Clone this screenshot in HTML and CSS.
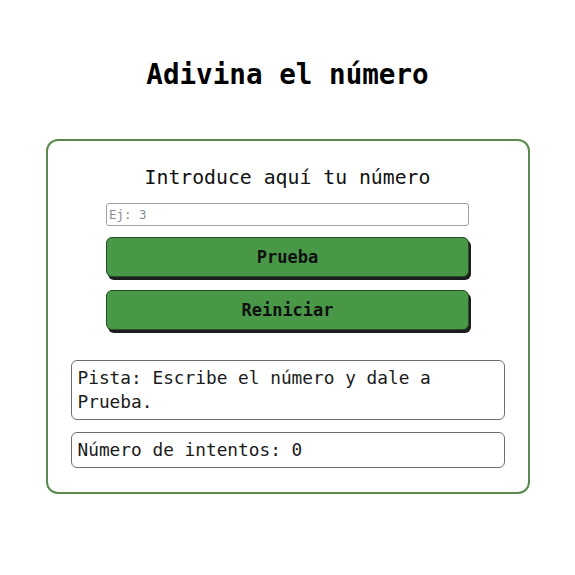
FILE: index.html
```html
<!DOCTYPE html>
<html lang="es">
<head>
<meta charset="utf-8">
<title>Adivina el número</title>
<link rel="stylesheet" href="styles.css">
</head>
<body>
<h1 class="title">Adivina el número</h1>
<main class="card">
  <h2 class="prompt">Introduce aquí tu número</h2>
  <div class="controls">
    <input class="guess" type="text" placeholder="Ej: 3">
    <button class="btn btn-try" type="button">Prueba</button>
    <button class="btn btn-reset" type="button">Reiniciar</button>
  </div>
  <div class="messages">
    <p class="msg">Pista: Escribe el número y dale a Prueba.</p>
    <p class="msg">Número de intentos: 0</p>
  </div>
</main>
</body>
</html>
```
FILE: styles.css
```css
* { box-sizing: border-box; }
html, body { margin: 0; padding: 0; background: #fff; }
body {
  font-family: "DejaVu Sans Mono", "Liberation Mono", monospace;
  color: #111;
  padding-top: 59px;
}
.title {
  margin: 0 0 48px;
  font-size: 27.6px;
  line-height: 32px;
  font-weight: bold;
  text-align: center;
  color: #000;
}
.card {
  width: 484px;
  margin: 0 auto;
  border: 2px solid #5b8a50;
  border-radius: 12px;
  padding: 25px 23px 24px 23px;
  display: flex;
  flex-direction: column;
}
.prompt {
  margin: 0;
  font-size: 19.8px;
  line-height: 24px;
  font-weight: normal;
  text-align: center;
}
.controls {
  width: 363px;
  margin: 13px auto 0;
  display: flex;
  flex-direction: column;
}
.guess {
  height: 23px;
  border: 1px solid #a0a0a0;
  border-radius: 3px;
  padding: 1px 2px;
  font-family: "DejaVu Sans Mono", monospace;
  font-size: 12.5px;
  color: #333;
  outline: none;
}
.guess::placeholder { color: #8c8c8c; }
.btn {
  height: 40px;
  background: #489848;
  border: 1px solid #264d26;
  border-radius: 6px;
  box-shadow: 2px 3px 0 #1d1d1d;
  font-family: "DejaVu Sans Mono", monospace;
  font-size: 17px;
  font-weight: bold;
  color: #111;
  padding: 0;
}
.btn-try { margin-top: 11px; }
.btn-reset { margin-top: 13px; }
.messages {
  margin-top: 30px;
  display: flex;
  flex-direction: column;
  gap: 12px;
}
.msg {
  margin: 0;
  border: 1.5px solid #6e6e6e;
  border-radius: 6px;
  padding: 5px 6px;
  font-size: 17.8px;
  line-height: 24px;
  color: #1a1a1a;
}
```
